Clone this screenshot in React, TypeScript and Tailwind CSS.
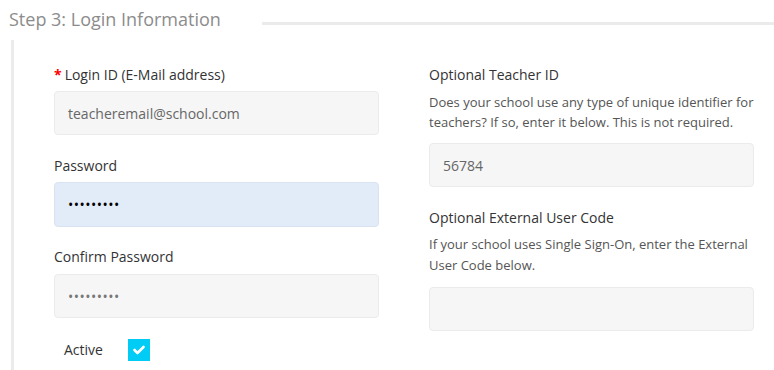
import React from "react";

const font = { fontFamily: '"Open Sans", "Liberation Sans", sans-serif' };

function Field({
  children,
  className = "",
  tone = "gray",
}: {
  children?: React.ReactNode;
  className?: string;
  tone?: "gray" | "blue" | "dots";
}) {
  const toneCls =
    tone === "blue"
      ? "bg-[#e2ecf9] border-[#d9e3f0] text-black tracking-[0.5px]"
      : tone === "dots"
      ? "bg-[#f6f6f6] border-[#ebebeb] text-[#777] tracking-[0.5px]"
      : "bg-[#f6f6f6] border-[#ebebeb] text-[#666]";
  return (
    <div
      className={`w-full rounded-[4px] border pl-[13px] flex items-center text-[14px] ${toneCls} ${className}`}
    >
      {children}
    </div>
  );
}

export default function App() {
  return (
    <div className="w-[774px] h-[370px] bg-white overflow-hidden" style={font}>
      <div className="flex items-center h-[40px]">
        <div className="pl-[9px] text-[18px] leading-[24px] text-[#8c8c8c] -mt-[3px]">Step 3: Login Information</div>
        <div className="flex-1 ml-[41px] h-[3px] bg-[#ebebeb] mt-[7px]" />
      </div>
      <div className="ml-[11px] border-l-[3px] border-[#ebebeb] h-[330px] pl-[40px] pt-[25px] flex gap-[50px]">
        <div className="w-[325px] flex flex-col">
          <div className="text-[14px] leading-[20px] text-[#333]">
            <span className="text-[#ff0000] font-bold mr-[3px]">*</span>Login ID (E-Mail address)
          </div>
          <Field className="mt-[6px] h-[44px]">teacheremail@school.com</Field>
          <div className="mt-[21px] text-[14px] leading-[20px] text-[#333]">Password</div>
          <Field tone="blue" className="mt-[6px] h-[45px]">•••••••••</Field>
          <div className="mt-[20px] text-[14px] leading-[20px] text-[#333]">Confirm Password</div>
          <Field tone="dots" className="mt-[7px] h-[44px]">•••••••••</Field>
          <div className="mt-[21px] flex items-center pl-[10px]">
            <span className="w-[64px] text-[14px] leading-[20px] text-[#333]">Active</span>
            <span className="w-[22px] h-[22px] bg-[#00ccf6] flex items-center justify-center">
              <svg width="12" height="10" viewBox="0 0 12 10">
                <path d="M1.5 5 L4.5 8 L10.5 2" stroke="white" strokeWidth="2.6" fill="none" strokeLinecap="round" strokeLinejoin="round" />
              </svg>
            </span>
          </div>
        </div>
        <div className="w-[325px] flex flex-col">
          <div className="text-[14px] leading-[20px] text-[#333]">Optional Teacher ID</div>
          <div className="mt-[7px] text-[13px] leading-[20px] text-[#555]">
            Does your school use any type of unique identifier for teachers? If so, enter it below. This is not required.
          </div>
          <Field className="mt-[11px] h-[44px]">56784</Field>
          <div className="mt-[21px] text-[14px] leading-[20px] text-[#333]">Optional External User Code</div>
          <div className="mt-[6px] text-[13px] leading-[21px] text-[#555]">
            If your school uses Single Sign-On, enter the External User Code below.
          </div>
          <Field className="mt-[11px] h-[44px]" />
        </div>
      </div>
    </div>
  );
}
